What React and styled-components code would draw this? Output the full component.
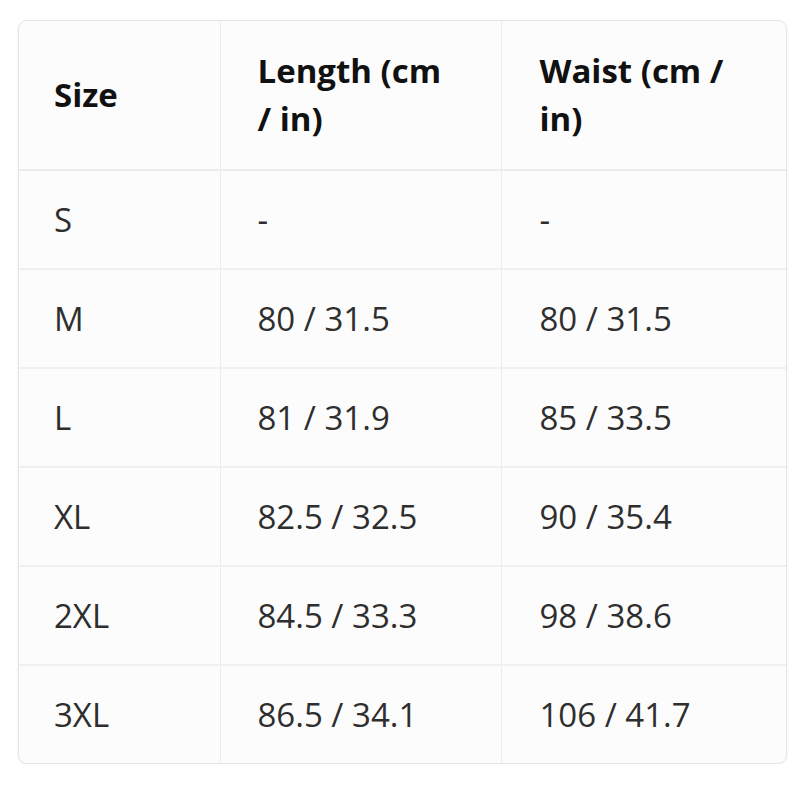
import React from 'react'
import styled, { createGlobalStyle } from 'styled-components'

const Global = createGlobalStyle`
  html, body {
    margin: 0;
    background: #ffffff;
  }
  body {
    font-family: "Open Sans", "Noto Sans", sans-serif;
  }
`

const rows = [
  { size: 'S', length: '-', waist: '-' },
  { size: 'M', length: '80 / 31.5', waist: '80 / 31.5' },
  { size: 'L', length: '81 / 31.9', waist: '85 / 33.5' },
  { size: 'XL', length: '82.5 / 32.5', waist: '90 / 35.4' },
  { size: '2XL', length: '84.5 / 33.3', waist: '98 / 38.6' },
  { size: '3XL', length: '86.5 / 34.1', waist: '106 / 41.7' },
]

const Page = styled.div`
  padding: 20px 15px 0 18px;
`

const Frame = styled.div`
  width: 767px;
  border: 1px solid #e4e4e4;
  border-radius: 9px;
  overflow: hidden;
  background: #fcfcfc;
  box-shadow: 0 1px 3px rgba(0, 0, 0, 0.06);
`

const Table = styled.table`
  width: 100%;
  border-collapse: collapse;
  table-layout: fixed;
`

const Head = styled.th`
  text-align: left;
  font-weight: 700;
  font-size: 33px;
  line-height: 48px;
  color: #111;
  padding: 26px ${p => p.$right || 30}px 26px ${p => p.$pad || 37}px;
  border-right: 1px solid #ececec;
  border-bottom: 2px solid #ededed;
  &:last-child { border-right: none; }
`

const Cell = styled.td`
  font-size: 33px;
  line-height: 40px;
  color: #2e2e2e;
  height: 97px;
  padding: 0 20px 0 ${p => p.$pad || 37}px;
  border-right: 1px solid #ececec;
  border-bottom: 2px solid #f0f0f0;
  &:last-child { border-right: none; }
`

const Row = styled.tr`
  &:last-child td { border-bottom: none; }
`

export default function App() {
  return (
    <Page>
      <Global />
      <Frame>
        <Table>
          <colgroup>
            <col style={{ width: 201 }} />
            <col style={{ width: 281 }} />
            <col />
          </colgroup>
          <thead>
            <tr>
              <Head $pad={35}>Size</Head>
              <Head $right={48}>Length (cm / in)</Head>
              <Head $pad={38} $right={36}>Waist (cm / in)</Head>
            </tr>
          </thead>
          <tbody>
            {rows.map(r => (
              <Row key={r.size}>
                <Cell $pad={35}>{r.size}</Cell>
                <Cell>{r.length}</Cell>
                <Cell $pad={38}>{r.waist}</Cell>
              </Row>
            ))}
          </tbody>
        </Table>
      </Frame>
    </Page>
  )
}
